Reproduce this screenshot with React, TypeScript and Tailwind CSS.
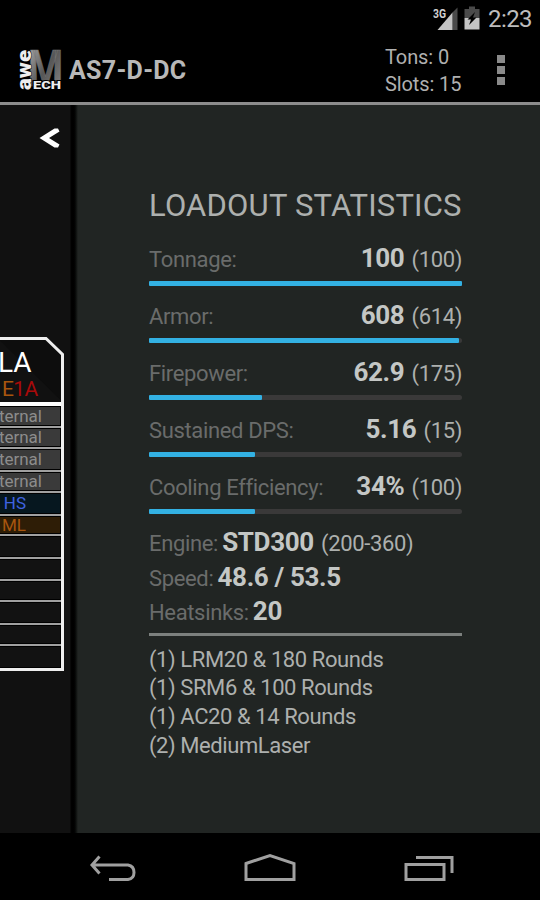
import { clsx } from 'clsx';

interface Stat {
  label: string;
  value: string;
  max: string;
  percent: number;
}

interface Slot {
  text?: string;
  height: string;
  fill: string;
}

const stats: Stat[] = [
  { label: 'Tonnage:', value: '100', max: '(100)', percent: 100 },
  { label: 'Armor:', value: '608', max: '(614)', percent: 99 },
  { label: 'Firepower:', value: '62.9', max: '(175)', percent: 36 },
  { label: 'Sustained DPS:', value: '5.16', max: '(15)', percent: 34 },
  { label: 'Cooling Efficiency:', value: '34%', max: '(100)', percent: 34 },
];

const weapons = [
  '(1) LRM20 & 180 Rounds',
  '(1) SRM6 & 100 Rounds',
  '(1) AC20 & 14 Rounds',
  '(2) MediumLaser',
];

const internal = 'bg-[#3a3a3a] text-[#8c8c8c] pr-[18px]';

const slots: Slot[] = [
  { text: 'ternal', height: 'h-[22px]', fill: internal },
  { text: 'ternal', height: 'h-[21px]', fill: internal },
  { text: 'ternal', height: 'h-[23px]', fill: internal },
  { text: 'ternal', height: 'h-[21px]', fill: internal },
  { text: 'HS', height: 'h-[23px]', fill: 'bg-[#06171f] text-[#3f63e0] pr-[34px]' },
  { text: 'ML', height: 'h-[20px]', fill: 'bg-[#2e1d06] text-[#a8560e] pr-[34px]' },
  { height: 'h-[23px]', fill: 'bg-[#121212]' },
  { height: 'h-[22px]', fill: 'bg-[#121212]' },
  { height: 'h-[21px]', fill: 'bg-[#121212]' },
  { height: 'h-[23px]', fill: 'bg-[#121212]' },
  { height: 'h-[21px]', fill: 'bg-[#121212]' },
  { height: 'h-[22px]', fill: 'bg-[#121212]' },
];

function StatusBar() {
  return (
    <div className="h-[37px] flex items-center justify-end pr-[8px]">
      <svg width="26" height="26" viewBox="0 0 26 26">
        <path d="M24.500 1.500V24H19.500V6.500Z" fill="#4a4a4a" />
        <path d="M19.500 6.500V24H4.500Z" fill="#c4c4c4" />
        <text x="0" y="11.500" fontSize="12" fontWeight="700" textLength="13" lengthAdjust="spacingAndGlyphs" fill="#d0d0d0" stroke="#000" strokeWidth="2" paintOrder="stroke">
          3G
        </text>
      </svg>
      <svg className="ml-[5px] -mt-[2px]" width="16" height="24" viewBox="0 0 16 24">
        <path d="M5 0.500H11V3H15.500V12H0.500V3H5Z" fill="#4a4a4a" />
        <path d="M0.500 12H15.500V23.500H0.500Z" fill="#c4c4c4" />
        <path d="M11 6L3.500 13.500H7L5 19L12.500 11.500H9Z" fill="#000" />
      </svg>
      <span className="ml-[8px] pt-px text-[24px] leading-[37px] tracking-[-0.6px] text-[#bdbdbd]">2:23</span>
    </div>
  );
}

function Logo() {
  return (
    <svg className="overflow-visible" width="44" height="42" viewBox="0 0 44 42">
      <defs>
        <linearGradient id="metal" x1="0" y1="0" x2="1" y2="1">
          <stop offset="0" stopColor="#b5b5b5" />
          <stop offset="0.5" stopColor="#565656" />
          <stop offset="1" stopColor="#909090" />
        </linearGradient>
      </defs>
      <text x="9" y="37" fontSize="50" fontWeight="700" textLength="35" lengthAdjust="spacingAndGlyphs" fill="url(#metal)" stroke="#777" strokeWidth="0.600">
        M
      </text>
      <text transform="translate(12 41) rotate(-90)" fontSize="20" fontWeight="900" textLength="40" lengthAdjust="spacingAndGlyphs" fill="#eee" stroke="#000" strokeWidth="1" paintOrder="stroke">
        awe
      </text>
      <text x="14" y="40" fontSize="10" fontWeight="900" textLength="28" lengthAdjust="spacingAndGlyphs" fill="#eee" stroke="#000" strokeWidth="2" paintOrder="stroke">
        ECH
      </text>
    </svg>
  );
}

function ActionBar() {
  return (
    <div className="relative z-10 h-[68px] flex items-center border-b-3 border-[#8c8c8c] pl-[19px] pr-[35px]">
      <Logo />
      <h1 className="ml-[6px] pt-[2px] text-[25px] font-bold tracking-[0.3px] text-[#b8b8b8]">AS7-D-DC</h1>
      <div className="ml-auto pt-[3px] w-[112px] text-[20px] leading-[27px] tracking-[-0.1px] text-[#b0b0b0]">
        <p>Tons: 0</p>
        <p>Slots: 15</p>
      </div>
      <div className="flex flex-col gap-[3px]">
        <span className="size-[8px] bg-[#8a8a8a]" />
        <span className="size-[8px] bg-[#8a8a8a]" />
        <span className="size-[8px] bg-[#8a8a8a]" />
      </div>
    </div>
  );
}

function ArmPanel() {
  return (
    <aside className="w-[70px] shrink-0 bg-[#111] overflow-hidden">
      <svg className="mt-[22px] ml-[38px]" width="24" height="22" viewBox="0 0 24 22">
        <path d="M20 1.500L21.500 4.500L11 11L21.500 17.500L20 20.500L16.500 20.500L1.500 11L16.500 1.500Z" fill="#fff" />
      </svg>
      <div className="relative mt-[187px] h-[66px] w-[64px]">
        <svg className="absolute inset-0" width="64" height="66" viewBox="0 0 64 66">
          <path d="M-2 2.500H46L62.500 18.500V66" fill="#0d0d0d" stroke="#eee" strokeWidth="3" />
        </svg>
        <div className="relative flex flex-col">
          <span className="mt-[11px] -ml-[2px] text-[28px] leading-[32px] tracking-[-0.2px] text-white">LA</span>
          <span className="ml-[2px] text-[21px] leading-[20px] tracking-[-0.6px] text-[#a80a0a]">
            <span className="text-[#a8560e]">E</span>1A
          </span>
        </div>
      </div>
      <div className="w-[64px] border-r-[3px] border-b-[3px] border-[#eee] bg-black">
        <div className="h-[4px] bg-white" />
        {slots.map((slot, index) => (
          <div key={index} className={clsx('pt-px pb-px pr-px border-b-2 border-[#a0a0a0] last:border-b-0', slot.height)}>
            <div className={clsx('h-full flex items-center justify-end text-[17px] leading-none', slot.fill)}>
              {slot.text}
            </div>
          </div>
        ))}
      </div>
    </aside>
  );
}

function StatRow({ stat }: { stat: Stat }) {
  return (
    <div className="h-[57px]">
      <div className="flex items-baseline justify-between h-[35px] leading-[37px]">
        <span className="text-[22px] text-[#6a6c6b]">{stat.label}</span>
        <span className="text-[22px] text-[#adb0ae]">
          <b className="mr-[2px] text-[26px] text-[#c4c7c5]">{stat.value}</b> {stat.max}
        </span>
      </div>
      <div className="mt-[6px] h-[5px] flex items-center">
        <div className="h-[5px] rounded-[1px] bg-[#33b1e3]" style={{ width: `${stat.percent}%` }} />
        <div className="h-[5px] flex-1 rounded-r-sm bg-[#3a3939]" />
      </div>
    </div>
  );
}

function InfoLine({ label, value, range }: { label: string; value: string; range?: string }) {
  return (
    <p className="h-[34.500px] leading-[35.500px] text-[22px] text-[#adb0ae] whitespace-nowrap">
      <span className="text-[#6a6c6b]">{label}</span>{' '}
      <b className="-ml-px mr-[2px] text-[26px] text-[#c4c7c5]">{value}</b> {range}
    </p>
  );
}

function LoadoutStatistics() {
  return (
    <main className="flex-1 bg-[#212523] pt-[83px] pl-[71px]">
      <div className="w-[313px] tracking-[-0.35px]">
        <h2 className="mb-[16px] text-[31px] leading-[36px] tracking-[0.2px] whitespace-nowrap text-[#adb0ae]">LOADOUT STATISTICS</h2>
        {stats.map((stat) => (
          <StatRow key={stat.label} stat={stat} />
        ))}
        <InfoLine label="Engine:" value="STD300" range="(200-360)" />
        <InfoLine label="Speed:" value="48.6 / 53.5" />
        <InfoLine label="Heatsinks:" value="20" />
        <div className="mt-[4px] h-[3px] bg-[#7c807e]" />
        <ul className="mt-[10px] text-[22px] leading-[28.800px] tracking-[-0.42px] text-[#adb0ae]">
          {weapons.map((weapon) => (
            <li key={weapon}>{weapon}</li>
          ))}
        </ul>
      </div>
    </main>
  );
}

function NavBar() {
  return (
    <nav className="h-[67px] flex items-center pt-[2px] pl-[88px] pr-[85px] justify-between">
      <svg width="48" height="30" viewBox="0 0 48 30" fill="none" stroke="#a0a0a0" strokeWidth="3">
        <path d="M11.500 3.500L4 12L11.500 20.500M4 12H40Q46 13 46 19.500Q46 25.500 40 26.500H21" />
      </svg>
      <svg width="54" height="30" viewBox="0 0 54 30" fill="none" stroke="#a0a0a0" strokeWidth="3">
        <path d="M3 10.500L27 2.500L51 10.500V26.500H3Z" />
      </svg>
      <svg width="52" height="30" viewBox="0 0 52 30" fill="none" stroke="#a0a0a0" strokeWidth="3">
        <path d="M3 11.500H41V26.500H3ZM13 4.500H49V20" />
      </svg>
    </nav>
  );
}

export default function App() {
  return (
    <div className="w-[540px] h-[900px] flex flex-col bg-black overflow-hidden font-['Roboto','Liberation_Sans',sans-serif]">
      <StatusBar />
      <ActionBar />
      <div className="flex-1 min-h-0 flex">
        <ArmPanel />
        <div className="w-[8px] shrink-0 bg-linear-to-r from-[#111] via-black via-30% to-[#212523]" />
        <LoadoutStatistics />
      </div>
      <NavBar />
    </div>
  );
}
